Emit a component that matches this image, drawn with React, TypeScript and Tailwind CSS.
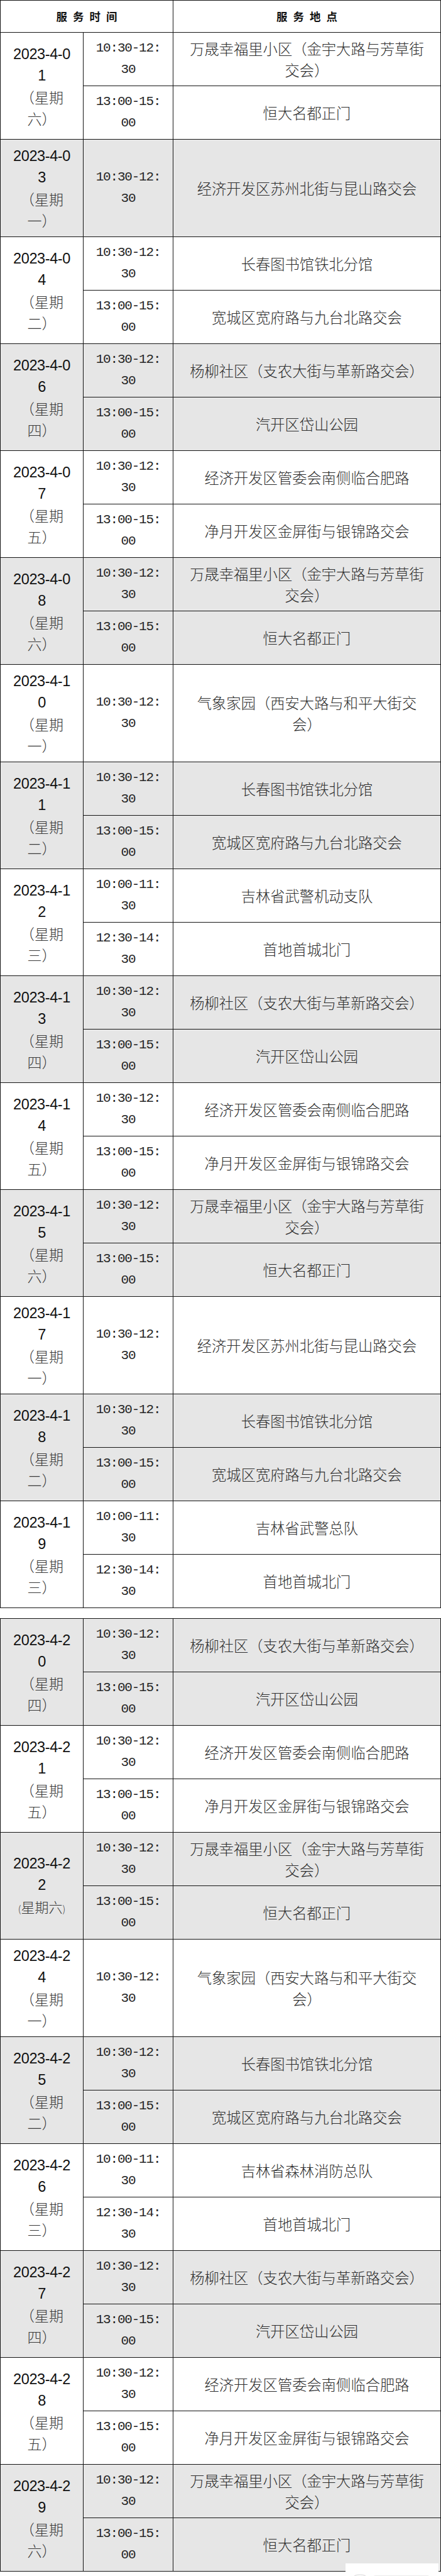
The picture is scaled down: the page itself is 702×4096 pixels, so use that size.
import React from "react";

type Slot = { time: string[]; place: string[] };
type Day = { date: string[]; week: string[]; slots: Slot[]; oneLineWeek?: boolean };

// time strings, broken where the narrow column breaks them
const AM = ["10:30-12:", "30"];
const PM = ["13:00-15:", "00"];
const EARLY = ["10:00-11:", "30"];
const NOON = ["12:30-14:", "30"];

// places
const WS = ["万晟幸福里小区（金宇大路与芳草街", "交会）"];
const HD = ["恒大名都正门"];
const SZ = ["经济开发区苏州北街与昆山路交会"];
const TB = ["长春图书馆铁北分馆"];
const KC = ["宽城区宽府路与九台北路交会"];
const YL = ["杨柳社区（支农大街与革新路交会）"];
const DS = ["汽开区岱山公园"];
const GW = ["经济开发区管委会南侧临合肥路"];
const JY = ["净月开发区金屏街与银锦路交会"];
const QX = ["气象家园（西安大路与和平大街交", "会）"];
const SD = ["首地首城北门"];

const day = (d: string, w: string, slots: Slot[], oneLineWeek = false): Day => ({
  date: [d.slice(0, 8), d.slice(8)],
  week: ["（星期", w + "）"],
  slots,
  oneLineWeek,
});

const sat = (d: string, one = false) => day(d, "六", [{ time: AM, place: WS }, { time: PM, place: HD }], one);
const tue = (d: string) => day(d, "二", [{ time: AM, place: TB }, { time: PM, place: KC }]);
const thu = (d: string) => day(d, "四", [{ time: AM, place: YL }, { time: PM, place: DS }]);
const fri = (d: string) => day(d, "五", [{ time: AM, place: GW }, { time: PM, place: JY }]);

const firstTable: Day[] = [
  sat("2023-4-01"),
  day("2023-4-03", "一", [{ time: AM, place: SZ }]),
  tue("2023-4-04"),
  thu("2023-4-06"),
  fri("2023-4-07"),
  sat("2023-4-08"),
  day("2023-4-10", "一", [{ time: AM, place: QX }]),
  tue("2023-4-11"),
  day("2023-4-12", "三", [{ time: EARLY, place: ["吉林省武警机动支队"] }, { time: NOON, place: SD }]),
  thu("2023-4-13"),
  fri("2023-4-14"),
  sat("2023-4-15"),
  day("2023-4-17", "一", [{ time: AM, place: SZ }]),
  tue("2023-4-18"),
  day("2023-4-19", "三", [{ time: EARLY, place: ["吉林省武警总队"] }, { time: NOON, place: SD }]),
];

const secondTable: Day[] = [
  thu("2023-4-20"),
  fri("2023-4-21"),
  sat("2023-4-22", true),
  day("2023-4-24", "一", [{ time: AM, place: QX }]),
  tue("2023-4-25"),
  day("2023-4-26", "三", [{ time: EARLY, place: ["吉林省森林消防总队"] }, { time: NOON, place: SD }]),
  thu("2023-4-27"),
  fri("2023-4-28"),
  sat("2023-4-29"),
];

const cell = "border border-[#151515] text-center align-middle p-0";

const DateCell = ({ d, rows }: { d: Day; rows: number }) => (
  <td rowSpan={rows} className={cell}>
    <div className="font-['Liberation_Sans','Noto_Sans_CJK_SC',sans-serif] text-[23.5px] leading-[34px] text-[#111] tracking-[-0.4px]">
      {d.date.map((l) => (
        <div key={l}>{l}</div>
      ))}
      {d.oneLineWeek ? (
        <div className="font-['Noto_Sans_CJK_SC',sans-serif] font-light text-[22px] tracking-normal text-[#3a3a3a]">
          <span className="text-[15px]">(</span>星期六<span className="text-[15px]">)</span>
        </div>
      ) : (
        d.week.map((l) => (
          <div key={l} className="font-['Noto_Sans_CJK_SC',sans-serif] font-light text-[23px] tracking-normal text-[#3a3a3a]">
            {l}
          </div>
        ))
      )}
    </div>
  </td>
);

const TimeCell = ({ lines }: { lines: string[] }) => (
  <td className={cell}>
    <div className="font-['Liberation_Mono',monospace] text-[21px] tracking-[-1.2px] leading-[34px] text-[#262626]">
      {lines.map((l, i) => (
        <div key={i}>{l}</div>
      ))}
    </div>
  </td>
);

const PlaceCell = ({ lines }: { lines: string[] }) => (
  <td className={cell}>
    <div className="font-['Noto_Sans_CJK_SC',sans-serif] font-light text-[23.3px] leading-[34px] text-[#2e2e2e] whitespace-nowrap">
      {lines.map((l, i) => (
        <div key={i}>{l}</div>
      ))}
    </div>
  </td>
);

const DayRows = ({ d, gray }: { d: Day; gray: boolean }) => {
  const bg = gray ? "bg-[#e6e6e6]" : "bg-white";
  if (d.slots.length === 1) {
    return (
      <tr className={`${bg} h-[155px]`}>
        <DateCell d={d} rows={1} />
        <TimeCell lines={d.slots[0].time} />
        <PlaceCell lines={d.slots[0].place} />
      </tr>
    );
  }
  return (
    <>
      <tr className={`${bg} h-[85px]`}>
        <DateCell d={d} rows={2} />
        <TimeCell lines={d.slots[0].time} />
        <PlaceCell lines={d.slots[0].place} />
      </tr>
      <tr className={`${bg} h-[85px]`}>
        <TimeCell lines={d.slots[1].time} />
        <PlaceCell lines={d.slots[1].place} />
      </tr>
    </>
  );
};

const Cols = () => (
  <colgroup>
    <col className="w-[132px]" />
    <col className="w-[143px]" />
    <col />
  </colgroup>
);

const ScheduleTable = ({ days, header, startGray }: { days: Day[]; header?: boolean; startGray: boolean }) => (
  <table className="w-full table-fixed border-collapse">
    <Cols />
    <tbody>
      {header && (
        <tr className="h-[51px] bg-white">
          <th colSpan={2} className={cell}>
            <span className="pl-[9px] font-['Noto_Sans_CJK_SC',sans-serif] font-bold text-[17.5px] tracking-[9px] text-[#111]">
              服务时间
            </span>
          </th>
          <th className={cell}>
            <span className="pl-[9px] font-['Noto_Sans_CJK_SC',sans-serif] font-bold text-[17.5px] tracking-[9px] text-[#111]">
              服务地点
            </span>
          </th>
        </tr>
      )}
      {days.map((d, i) => (
        <DayRows key={d.date.join("")} d={d} gray={startGray ? i % 2 === 0 : i % 2 === 1} />
      ))}
    </tbody>
  </table>
);

export default function App() {
  return (
    <div className="relative w-[702px] bg-white pb-[16px]">
      <ScheduleTable days={firstTable} header startGray={false} />
      {/* second part of the schedule */}
      <div className="mt-[16px]">
        <ScheduleTable days={secondTable} startGray />
      </div>

      {/* faint watermark in the bottom corner */}
      <div className="absolute bottom-0 right-[4px] w-[148px] h-[29px] bg-white flex items-end justify-center pb-[3px]">
        <svg width="130" height="10" viewBox="0 0 130 10">
          <ellipse cx="14" cy="5" rx="9" ry="3" fill="none" stroke="#e4e4e4" strokeWidth="1.5" />
          <rect x="36" y="3" width="88" height="4" rx="2" fill="#ececec" />
        </svg>
      </div>
    </div>
  );
}
